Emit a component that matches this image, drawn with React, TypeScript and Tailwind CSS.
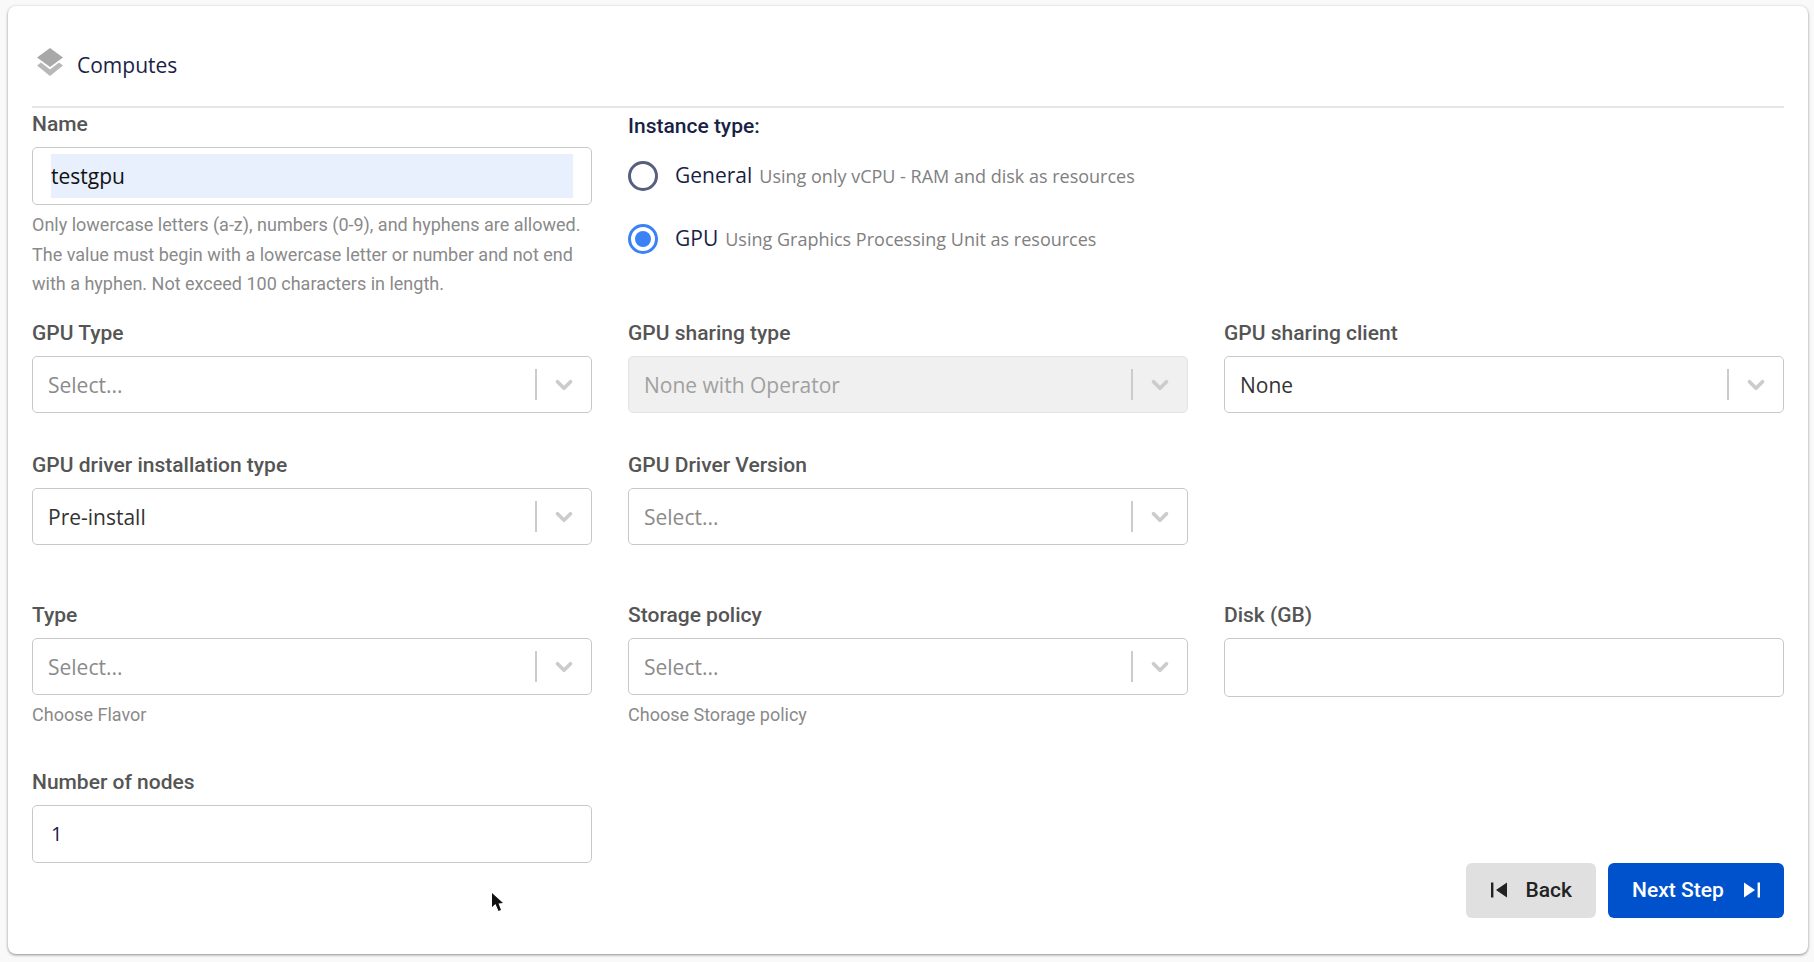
import { ChevronDown } from 'lucide-react';

const open = "font-['Open_Sans',sans-serif]";
const roboto = "font-['Roboto',sans-serif]";

function Label({ children }: { children: string }) {
  return <label className={`block h-[28px] text-[21px] leading-[28px] font-medium text-[#555555] ${roboto}`}>{children}</label>;
}

function Select({ value, placeholder, disabled }: { value?: string; placeholder?: string; disabled?: boolean }) {
  return (
    <div className={`mt-[9px] flex h-[57px] items-center rounded-[5px] border border-[#c8c8c8] ${disabled ? 'bg-[#f0f0f0] border-[#e4e4e4]' : 'bg-white'}`}>
      <span className={`flex-1 pt-[4px] pl-[15px] text-[21px] ${open} ${value && !disabled ? 'text-[#333333]' : 'text-[#8b8b8b]'} ${disabled ? 'text-[#a0a0a0]' : ''}`}>
        {value || placeholder}
      </span>
      <span className="h-[31px] w-[2px] bg-[#cccccc]" />
      <span className="flex w-[54px] justify-center pt-[2px]">
        <ChevronDown className="h-[26px] w-[26px] text-[#cccccc]" strokeWidth={3.4} />
      </span>
    </div>
  );
}

function Input({ value, tall }: { value?: string; tall?: boolean }) {
  return (
    <div className={`mt-[9px] flex items-center rounded-[5px] border border-[#c8c8c8] bg-white pl-[18px] text-[20px] text-[#1a1f46] ${open} ${tall ? 'h-[59px]' : 'h-[58px]'}`}>
      {value}
    </div>
  );
}

function Helper({ children }: { children: string }) {
  return <p className={`mt-[5px] text-[18px] leading-[29.5px] text-[#8a8a8a] ${roboto}`}>{children}</p>;
}

function Radio({ label, note, checked }: { label: string; note: string; checked?: boolean }) {
  return (
    <div className="flex h-[30px] items-center">
      <span className={`flex h-[30px] w-[30px] items-center justify-center rounded-full border-[3px] ${checked ? 'border-[#3b82f6]' : 'border-[#585e80]'}`}>
        {checked && <span className="h-[16px] w-[16px] rounded-full bg-[#3b82f6]" />}
      </span>
      <span className={`ml-[17px] text-[21px] text-[#1a1f46] ${open}`}>{label}</span>
      <span className={`ml-[7px] text-[18px] text-[#808080] ${open}`}>{note}</span>
    </div>
  );
}

export default function App() {
  return (
    <div className="h-[962px] bg-[#f9f9f9] pt-[6px] pl-[8px] pr-[6px]">
      <div className="relative h-[948px] rounded-[8px] bg-white px-[24px] pt-[36px] shadow-[0_1px_3px_rgba(0,0,0,0.45)]">
        {/* header */}
        <div className="flex h-[48px] items-center border-none">
          <svg viewBox="0 0 26 28" className="mb-[8px] ml-[5px] h-[28px] w-[26px]">
            <polygon points="13,0 26,9.5 13,19 0,9.5" fill="#a8a8a8" />
            <polygon points="0,17.5 4,14.5 13,21.5 22,14.5 26,17.5 13,28" fill="#b8b8b8" />
          </svg>
          <span className={`ml-[14px] text-[21px] text-[#1a1f46] ${open}`}>Computes</span>
        </div>
        <div className="mt-[16px] h-[2px] w-[1752px] bg-[#e6e6e6]" />

        <div className="grid w-[1752px] grid-cols-3 gap-x-[36px]">
          <div className="pt-[2px]">
            <Label>Name</Label>
            <div className={`mt-[9px] flex h-[58px] items-center rounded-[5px] border border-[#c8c8c8] bg-white px-[18px] text-[21px] text-[#111111] ${open}`}>
              <span className="flex h-[44px] w-full items-center bg-[#e8effd] pt-[2px]">testgpu</span>
            </div>
            <Helper>Only lowercase letters (a-z), numbers (0-9), and hyphens are allowed. The value must begin with a lowercase letter or number and not end with a hyphen. Not exceed 100 characters in length.</Helper>
          </div>
          <div className="col-span-2 pt-[4px]">
            <label className={`block h-[28px] text-[21px] leading-[28px] font-medium text-[#1a1f46] ${roboto}`}>Instance type:</label>
            <div className="mt-[21px] flex flex-col gap-[33px]">
              <Radio label="General" note="Using only vCPU - RAM and disk as resources" />
              <Radio label="GPU" note="Using Graphics Processing Unit as resources" checked />
            </div>
          </div>
        </div>

        <div className="mt-[20px] grid w-[1752px] grid-cols-3 gap-x-[36px]">
          <div><Label>GPU Type</Label><Select placeholder="Select..." /></div>
          <div><Label>GPU sharing type</Label><Select value="None with Operator" disabled /></div>
          <div><Label>GPU sharing client</Label><Select value="None" /></div>
        </div>

        <div className="mt-[38px] grid w-[1752px] grid-cols-3 gap-x-[36px]">
          <div><Label>GPU driver installation type</Label><Select value="Pre-install" /></div>
          <div><Label>GPU Driver Version</Label><Select placeholder="Select..." /></div>
        </div>

        <div className="mt-[56px] grid w-[1752px] grid-cols-3 gap-x-[36px]">
          <div>
            <Label>Type</Label>
            <Select placeholder="Select..." />
            <p className={`mt-[5px] text-[18px] leading-[29px] text-[#8a8a8a] ${roboto}`}>Choose Flavor</p>
          </div>
          <div>
            <Label>Storage policy</Label>
            <Select placeholder="Select..." />
            <p className={`mt-[5px] text-[18px] leading-[29px] text-[#8a8a8a] ${roboto}`}>Choose Storage policy</p>
          </div>
          <div><Label>Disk (GB)</Label><Input tall /></div>
        </div>

        <div className="mt-[39px] grid w-[1752px] grid-cols-3 gap-x-[36px]">
          <div><Label>Number of nodes</Label><Input value="1" /></div>
        </div>

        <div className="flex w-[1752px] justify-end gap-[12px]">
          <button className={`flex h-[55px] w-[130px] items-center justify-between rounded-[6px] bg-[#e0e0e0] pr-[24px] pl-[25px] text-[21px] font-medium text-[#222222] ${roboto}`}>
            <svg viewBox="0 0 16 16" className="h-[16px] w-[16px]" fill="#222222">
              <rect x="0" y="0.5" width="2.4" height="15" />
              <polygon points="16,0.5 16,15.5 5,8" />
            </svg>
            <span className="pt-[2px]">Back</span>
          </button>
          <button className={`flex h-[55px] w-[176px] items-center justify-between rounded-[6px] bg-[#0052cc] px-[24px] text-[21px] font-medium text-white ${roboto}`}>
            <span className="pt-[2px]">Next Step</span>
            <svg viewBox="0 0 16 16" className="h-[16px] w-[16px]" fill="#ffffff">
              <polygon points="0,0.5 0,15.5 11,8" />
              <rect x="13.6" y="0.5" width="2.4" height="15" />
            </svg>
          </button>
        </div>

        {/* mouse pointer */}
        <svg viewBox="0 0 14 20" className="absolute left-[483px] top-[887px] h-[20px] w-[14px]">
          <path d="M1 0 L1 14 L4.5 11 L7.5 18 L10 17 L7.5 10.5 L12 10 Z" fill="#111111" />
        </svg>
      </div>
    </div>
  );
}
